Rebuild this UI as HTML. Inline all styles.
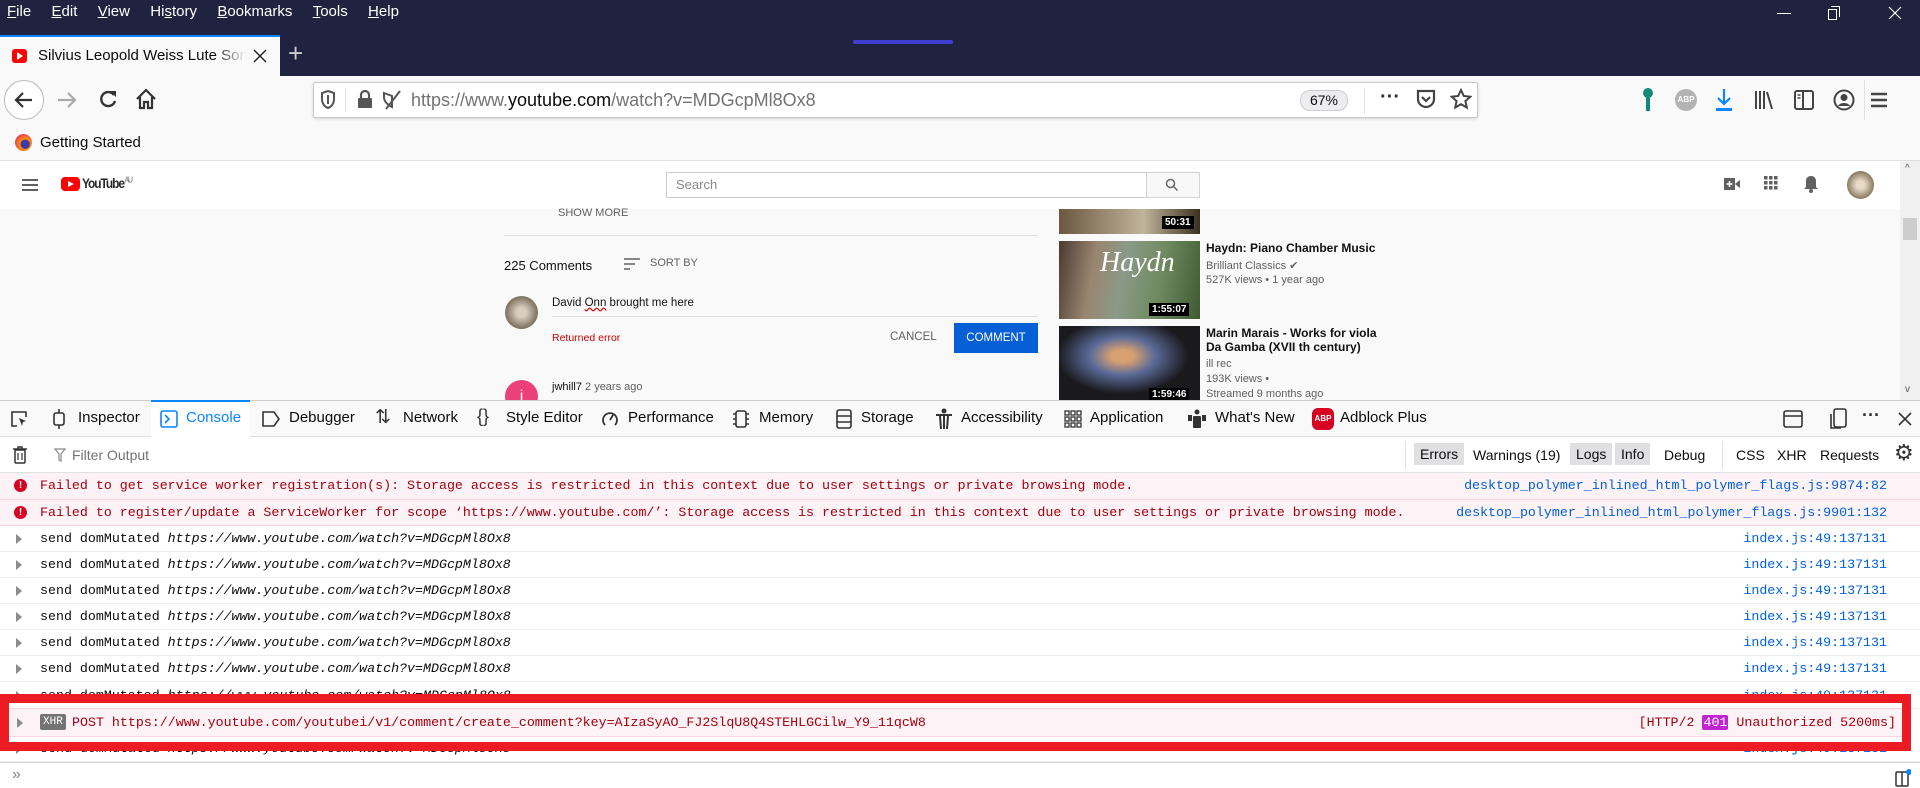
<!DOCTYPE html>
<html><head><meta charset="utf-8"><style>
*{box-sizing:border-box;margin:0;padding:0}
body{width:1920px;height:788px;overflow:hidden;position:relative;background:#fff;font-family:"Liberation Sans",sans-serif;font-size:15px;color:#0c0c0d}
.a{position:absolute;white-space:nowrap}
.mono{font-family:"Liberation Mono",monospace;font-size:13.3px}
.row{position:absolute;left:0;width:1920px;height:26px;border-bottom:1px solid #ededf0}
.row .t{position:absolute;left:40px;top:5px}
.row .s{position:absolute;right:33px;top:5px;color:#0060df}
.tri{position:absolute;left:16px;top:8px;width:0;height:0;border-left:6px solid #8a8a8f;border-top:5px solid transparent;border-bottom:5px solid transparent}
.err{background:#fdf2f5;border-bottom:1px solid #fcd3dc;color:#a4000f}
.ei{position:absolute;left:14px;top:6px;width:13px;height:13px;border-radius:50%;background:#d70022;color:#fff;font:bold 10px "Liberation Sans";text-align:center;line-height:13px}
.dt{position:absolute;top:409px;font-size:15px;color:#0c0c0d}
.fb{position:absolute;top:445px;font-size:14px;color:#0c0c0d;padding:2px 4px}
</style></head><body>
<div class="a" style="left:0;top:0;width:1920px;height:76px;background:#20233f"></div>
<div class="a" style="left:7px;top:3px;color:#fff;font-size:15px;word-spacing:6px"><u>F</u>ile &nbsp;<u>E</u>dit &nbsp;<u>V</u>iew &nbsp;Hi<u>s</u>tory &nbsp;<u>B</u>ookmarks &nbsp;<u>T</u>ools &nbsp;<u>H</u>elp</div>
<div class="a" style="left:853px;top:40px;width:100px;height:4px;border-radius:2px;background:#4040d0"></div>
<div class="a" style="left:1777px;top:13px;width:14px;height:1px;background:#fff"></div>
<div class="a" style="left:1828px;top:9px;width:9px;height:11px;border:1px solid #fff"></div>
<div class="a" style="left:1831px;top:6px;width:9px;height:11px;border-top:1px solid #fff;border-right:1px solid #fff"></div>
<svg class="a" style="left:1888px;top:6px" width="14" height="14" viewBox="0 0 14 14"><path d="M1 1l12 12M13 1L1 13" stroke="#fff" stroke-width="1.2"/></svg>
<div class="a" style="left:0;top:35px;width:280px;height:41px;background:#f9f9fa;border-top:2px solid #0a84ff"></div>
<div class="a" style="left:12px;top:49px;width:15px;height:14px;border-radius:3px;background:#f00"></div>
<div class="a" style="left:17px;top:52px;border-left:6px solid #fff;border-top:4px solid transparent;border-bottom:4px solid transparent"></div>
<div class="a" style="left:38px;top:47px;font-size:15px;width:208px;overflow:hidden;-webkit-mask-image:linear-gradient(90deg,#000 85%,transparent)">Silvius Leopold Weiss Lute Sonata</div>
<svg class="a" style="left:253px;top:49px" width="14" height="14" viewBox="0 0 14 14"><path d="M1 1l12 12M13 1L1 13" stroke="#222" stroke-width="1.4"/></svg>
<div class="a" style="left:288px;top:38px;color:#ccc;font-size:26px">+</div>
<div class="a" style="left:0;top:76px;width:1920px;height:85px;background:#f9f9fa;border-bottom:1px solid #e0e0e2"></div>
<div class="a" style="left:4px;top:80px;width:40px;height:40px;border-radius:50%;border:1px solid #bbb;background:#fff"></div>
<svg class="a" style="left:10px;top:86px" width="28" height="28" viewBox="0 0 28 28"><path d="M22 14H6M13 7l-7 7 7 7" stroke="#333" stroke-width="2.2" fill="none"/></svg>
<svg class="a" style="left:54px;top:87px" width="26" height="26" viewBox="0 0 26 26"><path d="M4 13h17M14 6l7 7-7 7" stroke="#aaa" stroke-width="2.2" fill="none"/></svg>
<svg class="a" style="left:97px;top:88px" width="22" height="22" viewBox="0 0 22 22"><path d="M17 7A7 7 0 1 0 18 13" stroke="#333" stroke-width="2.4" fill="none"/><path d="M13 3h6v6z" fill="#333"/></svg>
<svg class="a" style="left:134px;top:87px" width="24" height="24" viewBox="0 0 24 24"><path d="M3 12L12 3l9 9M6 10v11h4v-6h4v6h4V10" stroke="#333" stroke-width="2.2" fill="none"/></svg>
<div class="a" style="left:313px;top:82px;width:1165px;height:36px;background:#fff;border:1px solid #c8c8c8;border-radius:2px;box-shadow:0 1px 3px rgba(0,0,0,.15)"></div>
<svg class="a" style="left:320px;top:90px" width="16" height="20" viewBox="0 0 16 20"><path d="M8 1l6 2v6c0 5-3 8-6 9-3-1-6-4-6-9V3z" stroke="#555" stroke-width="2" fill="none"/><path d="M8 5v9" stroke="#555" stroke-width="2"/></svg>
<div class="a" style="left:345px;top:88px;width:1px;height:24px;background:#ddd"></div>
<svg class="a" style="left:357px;top:89px" width="16" height="20" viewBox="0 0 16 20"><path d="M4 9V6a4 4 0 0 1 8 0v3" stroke="#555" stroke-width="2.2" fill="none"/><rect x="1" y="9" width="14" height="10" rx="1" fill="#555"/></svg>
<svg class="a" style="left:381px;top:89px" width="22" height="22" viewBox="0 0 22 22"><path d="M3 4l8 3 0 11c-4-2-8-5-8-10z" stroke="#555" stroke-width="2" fill="none"/><path d="M5 20L19 2" stroke="#555" stroke-width="2"/></svg>
<div class="a" style="left:411px;top:90px;font-size:18px;color:#737373">https://www.<span style="color:#0c0c0d">youtube.com</span>/watch?v=MDGcpMl8Ox8</div>
<div class="a" style="left:1300px;top:90px;width:48px;height:21px;border:1px solid #ccc;border-radius:10px;background:#ededf0;font-size:14px;text-align:center;line-height:19px">67%</div>
<div class="a" style="left:1364px;top:88px;width:1px;height:26px;background:#e0e0e0"></div>
<div class="a" style="left:1380px;top:86px;font-size:20px;color:#333;font-weight:bold">···</div>
<svg class="a" style="left:1416px;top:89px" width="20" height="22" viewBox="0 0 20 22"><path d="M2 2h16v8a8 8 0 0 1-16 0z" stroke="#444" stroke-width="2.2" fill="none"/><path d="M6 8l4 4 4-4" stroke="#444" stroke-width="2.2" fill="none"/></svg>
<svg class="a" style="left:1450px;top:88px" width="22" height="22" viewBox="0 0 22 22"><path d="M11 2l2.8 6 6.5.7-4.9 4.4 1.4 6.4L11 16.2 5.2 19.5l1.4-6.4L1.7 8.7 8.2 8z" stroke="#444" stroke-width="2" fill="none"/></svg>
<svg class="a" style="left:1641px;top:87px" width="14" height="26" viewBox="0 0 14 26"><circle cx="7" cy="6" r="5" fill="#14897a"/><rect x="5" y="9" width="4" height="15" fill="#14897a"/></svg>
<div class="a" style="left:1675px;top:89px;width:22px;height:22px;border-radius:50%;background:#b3b3b3;color:#fff;font:bold 8px 'Liberation Sans';text-align:center;line-height:22px">ABP</div>
<svg class="a" style="left:1715px;top:88px" width="18" height="24" viewBox="0 0 18 24"><path d="M9 1v15M3 10l6 6 6-6" stroke="#0a84ff" stroke-width="2.2" fill="none"/><rect x="1" y="20" width="16" height="3" fill="#0a84ff"/></svg>
<svg class="a" style="left:1754px;top:89px" width="20" height="22" viewBox="0 0 20 22"><path d="M2 2v18M6 2v18M10 2v18M13 3l5 17" stroke="#444" stroke-width="2"/></svg>
<svg class="a" style="left:1794px;top:89px" width="20" height="22" viewBox="0 0 20 22"><rect x="1" y="2" width="18" height="18" rx="2" stroke="#444" stroke-width="2" fill="none"/><path d="M9 2v18" stroke="#444" stroke-width="2"/><path d="M3.5 6h3M3.5 9h3" stroke="#444" stroke-width="1.5"/></svg>
<svg class="a" style="left:1833px;top:89px" width="22" height="22" viewBox="0 0 22 22"><circle cx="11" cy="11" r="9.5" stroke="#444" stroke-width="2" fill="none"/><circle cx="11" cy="8.5" r="3.5" fill="#444"/><path d="M5 17c2-4 10-4 12 0" fill="#444"/></svg>
<div class="a" style="left:1864px;top:80px;width:1px;height:40px;background:#e0e0e0"></div>
<svg class="a" style="left:1870px;top:91px" width="18" height="18" viewBox="0 0 18 18"><path d="M1 3h16M1 9h16M1 15h16" stroke="#444" stroke-width="2.4"/></svg>
<div class="a" style="left:15px;top:134px;width:17px;height:17px;border-radius:50%;background:radial-gradient(circle at 60% 60%,#3e3aa8 30%,#ff9500 35%,#e31587 90%)"></div>
<div class="a" style="left:40px;top:134px;font-size:15px">Getting Started</div>
<div class="a" style="left:0;top:161px;width:1900px;height:240px;background:#f9f9f9"></div>
<div class="a" style="left:0;top:161px;width:1900px;height:48px;background:#fff"></div>
<svg class="a" style="left:21px;top:178px" width="18" height="14" viewBox="0 0 18 14"><path d="M1 2h16M1 7h16M1 12h16" stroke="#606060" stroke-width="2"/></svg>
<div class="a" style="left:61px;top:177px;width:19px;height:14px;border-radius:4px;background:#f00"></div>
<div class="a" style="left:68px;top:181px;border-left:6px solid #fff;border-top:3.5px solid transparent;border-bottom:3.5px solid transparent"></div>
<div class="a" style="left:82px;top:175px;font-size:14px;font-weight:bold;letter-spacing:-1.2px;color:#282828;transform:scaleX(.85);transform-origin:left">YouTube<sup style="font-size:8px;font-weight:normal;color:#606060"> AU</sup></div>
<div class="a" style="left:666px;top:172px;width:481px;height:26px;border:1px solid #ccc;background:#fff"></div>
<div class="a" style="left:676px;top:177px;font-size:13px;color:#888">Search</div>
<div class="a" style="left:1146px;top:172px;width:54px;height:26px;border:1px solid #d3d3d3;background:#f8f8f8"></div>
<svg class="a" style="left:1165px;top:178px" width="14" height="14" viewBox="0 0 14 14"><circle cx="5.5" cy="5.5" r="4" stroke="#666" stroke-width="1.5" fill="none"/><path d="M8.5 8.5l4 4" stroke="#666" stroke-width="1.5"/></svg>
<svg class="a" style="left:1724px;top:177px" width="16" height="14" viewBox="0 0 16 14"><rect x="0" y="1" width="11" height="12" fill="#606060"/><path d="M11 7l5-4v8z" fill="#606060"/><path d="M5.5 4v6M2.5 7h6" stroke="#fff" stroke-width="1.6"/></svg>
<svg class="a" style="left:1764px;top:176px" width="14" height="14" viewBox="0 0 14 14" fill="#606060"><rect x="0" y="0" width="3.5" height="3.5"/><rect x="5" y="0" width="3.5" height="3.5"/><rect x="10" y="0" width="3.5" height="3.5"/><rect x="0" y="5" width="3.5" height="3.5"/><rect x="5" y="5" width="3.5" height="3.5"/><rect x="10" y="5" width="3.5" height="3.5"/><rect x="0" y="10" width="3.5" height="3.5"/><rect x="5" y="10" width="3.5" height="3.5"/><rect x="10" y="10" width="3.5" height="3.5"/></svg>
<svg class="a" style="left:1804px;top:175px" width="14" height="18" viewBox="0 0 14 18"><path d="M7 1c3 0 5 2 5 5v6l2 2H0l2-2V6c0-3 2-5 5-5z" fill="#606060"/><circle cx="7" cy="16" r="2" fill="#606060"/></svg>
<div class="a" style="left:1847px;top:171px;width:27px;height:28px;border-radius:50%;background:radial-gradient(circle,#e8dcc8 20%,#8a7a60 70%,#6d6a5a)"></div>
<div class="a" style="left:1900px;top:161px;width:20px;height:240px;background:#f0f0f0"></div>
<div class="a" style="left:1903px;top:218px;width:14px;height:22px;background:#cdcdcd"></div>
<div class="a" style="left:1905px;top:163px;font-size:10px;color:#555">^</div>
<div class="a" style="left:1905px;top:384px;font-size:10px;color:#555">v</div>
<div class="a" style="left:558px;top:207px;font-size:11px;color:#606060">SHOW MORE</div>
<div class="a" style="left:504px;top:235px;width:534px;height:1px;background:#e0e0e0"></div>
<div class="a" style="left:504px;top:258px;font-size:13px;color:#111">225 Comments</div>
<svg class="a" style="left:624px;top:258px" width="16" height="13" viewBox="0 0 16 13"><path d="M0 1h16M0 6h11M0 11h6" stroke="#606060" stroke-width="1.6"/></svg>
<div class="a" style="left:650px;top:257px;font-size:11px;color:#606060">SORT BY</div>
<div class="a" style="left:505px;top:296px;width:33px;height:33px;border-radius:50%;background:radial-gradient(circle,#d8cfc0 20%,#847866 65%,#5b5448)"></div>
<div class="a" style="left:552px;top:297px;font-size:11.5px;color:#111">David <span style="text-decoration:underline wavy #d00">Onn</span> brought me here</div>
<div class="a" style="left:552px;top:316px;width:486px;height:1px;background:#ddd"></div>
<div class="a" style="left:552px;top:332px;font-size:10.5px;color:#c00">Returned error</div>
<div class="a" style="left:890px;top:331px;font-size:11.5px;color:#606060">CANCEL</div>
<div class="a" style="left:954px;top:323px;width:84px;height:30px;background:#065fd4;color:#fff;font-size:11.5px;text-align:center;line-height:30px">COMMENT</div>
<div class="a" style="left:505px;top:380px;width:33px;height:33px;border-radius:50%;background:#ec407a;color:#fff;text-align:center;font-size:16px;line-height:33px">j</div>
<div class="a" style="left:552px;top:381px;font-size:11px;color:#111">jwhill7 <span style="color:#606060">2 years ago</span></div>
<div class="a" style="left:1059px;top:209px;width:141px;height:25px;background:linear-gradient(90deg,#6a5840,#c0b49a 60%,#3a3020)"></div>
<div class="a" style="left:1162px;top:216px;background:#000;color:#fff;font:bold 10px 'Liberation Sans';padding:1px 3px">50:31</div>
<div class="a" style="left:1059px;top:241px;width:141px;height:78px;background:linear-gradient(100deg,#4a3a30 0%,#9a8570 25%,#8a9a88 45%,#6f8a60 70%,#3f5a30)"></div>
<div class="a" style="left:1100px;top:247px;font:italic 28px 'Liberation Serif';color:#fff">Haydn</div>
<div class="a" style="left:1149px;top:303px;background:#000;color:#fff;font:bold 10px 'Liberation Sans';padding:1px 3px">1:55:07</div>
<div class="a" style="left:1059px;top:326px;width:141px;height:75px;background:radial-gradient(ellipse at 45% 40%,#d6a070 10%,#5a6a98 30%,#1a1a1c 60%)"></div>
<div class="a" style="left:1149px;top:388px;background:#000;color:#fff;font:bold 10px 'Liberation Sans';padding:1px 3px">1:59:46</div>
<div class="a" style="left:1206px;top:241px;font-size:12px;font-weight:bold;color:#111">Haydn: Piano Chamber Music</div>
<div class="a" style="left:1206px;top:259px;font-size:11px;color:#606060">Brilliant Classics ✔</div>
<div class="a" style="left:1206px;top:274px;font-size:11px;color:#606060">527K views • 1 year ago</div>
<div class="a" style="left:1206px;top:326px;font-size:12px;font-weight:bold;color:#111;line-height:14px">Marin Marais - Works for viola<br>Da Gamba (XVII th century)</div>
<div class="a" style="left:1206px;top:357px;font-size:11px;color:#606060;line-height:15px">ill rec<br>193K views •<br>Streamed 9 months ago</div>
<div class="a" style="left:0;top:400px;width:1920px;height:37px;background:#f9f9fa;border-top:1px solid #ccc;border-bottom:1px solid #e0e0e2"></div>
<div class="a" style="left:151px;top:400px;width:99px;height:37px;background:#fff;border-top:2px solid #0a84ff"></div>
<svg class="a" style="left:10px;top:410px" width="18" height="18" viewBox="0 0 18 18"><path d="M7 16H2V2h14v5" stroke="#333" stroke-width="1.6" fill="none"/><path d="M9 8l7 3-3 1-1 4z" fill="#333"/></svg>
<svg class="a" style="left:52px;top:409px" width="14" height="20" viewBox="0 0 14 20"><rect x="2" y="4" width="10" height="12" rx="2" stroke="#333" stroke-width="1.6" fill="none"/><path d="M7 0v4M7 16v4" stroke="#333" stroke-width="1.6"/></svg>
<div class="dt" style="left:78px">Inspector</div>
<svg class="a" style="left:160px;top:410px" width="18" height="18" viewBox="0 0 18 18"><rect x="1" y="1" width="16" height="16" rx="2" stroke="#0a84ff" stroke-width="1.6" fill="none"/><path d="M5 5l4 4-4 4" stroke="#0a84ff" stroke-width="1.6" fill="none"/></svg>
<div class="dt" style="left:186px;color:#0a84ff">Console</div>
<svg class="a" style="left:262px;top:411px" width="18" height="16" viewBox="0 0 18 16"><path d="M1 1h11l5 7-5 7H1z" stroke="#333" stroke-width="1.6" fill="none"/></svg>
<div class="dt" style="left:289px">Debugger</div>
<div class="a" style="left:375px;top:406px;font-size:19px;color:#333">⇅</div>
<div class="dt" style="left:403px">Network</div>
<div class="a" style="left:477px;top:406px;font-size:18px;color:#333">{}</div>
<div class="dt" style="left:506px">Style Editor</div>
<svg class="a" style="left:601px;top:410px" width="18" height="18" viewBox="0 0 18 18"><path d="M4 15A7 7 0 1 1 14 15" stroke="#333" stroke-width="1.8" fill="none"/><path d="M9 10l3-5" stroke="#333" stroke-width="1.8"/></svg>
<div class="dt" style="left:628px">Performance</div>
<svg class="a" style="left:732px;top:409px" width="18" height="20" viewBox="0 0 18 20"><rect x="4" y="2" width="10" height="16" rx="2" stroke="#333" stroke-width="1.6" fill="none"/><path d="M1 5h3M1 10h3M1 15h3M14 5h3M14 10h3M14 15h3" stroke="#333" stroke-width="1.4"/></svg>
<div class="dt" style="left:759px">Memory</div>
<svg class="a" style="left:836px;top:409px" width="16" height="20" viewBox="0 0 16 20"><rect x="1" y="1" width="14" height="18" rx="2" stroke="#333" stroke-width="1.6" fill="none"/><path d="M1 7h14M1 13h14" stroke="#333" stroke-width="1.4"/></svg>
<div class="dt" style="left:861px">Storage</div>
<svg class="a" style="left:935px;top:408px" width="18" height="22" viewBox="0 0 18 22"><circle cx="9" cy="3" r="2.5" fill="#333"/><path d="M1 7h16M9 7v14M5 8l1 13M13 8l-1 13" stroke="#333" stroke-width="2"/></svg>
<div class="dt" style="left:961px">Accessibility</div>
<svg class="a" style="left:1064px;top:410px" width="18" height="18" viewBox="0 0 18 18" fill="none" stroke="#333" stroke-width="1.3"><rect x="1" y="1" width="4" height="4"/><rect x="7" y="1" width="4" height="4"/><rect x="13" y="1" width="4" height="4"/><rect x="1" y="7" width="4" height="4"/><rect x="7" y="7" width="4" height="4"/><rect x="13" y="7" width="4" height="4"/><rect x="1" y="13" width="4" height="4"/><rect x="7" y="13" width="4" height="4"/><rect x="13" y="13" width="4" height="4"/></svg>
<div class="dt" style="left:1090px">Application</div>
<svg class="a" style="left:1188px;top:409px" width="18" height="20" viewBox="0 0 18 20" fill="#333"><circle cx="9" cy="3" r="2.5"/><rect x="5" y="7" width="8" height="12" rx="1"/><rect x="0" y="6" width="4" height="6"/><rect x="14" y="6" width="4" height="6"/></svg>
<div class="dt" style="left:1215px">What's New</div>
<div class="a" style="left:1312px;top:408px;width:22px;height:22px;background:#d70022;border-radius:6px;color:#fff;font:bold 8px 'Liberation Sans';text-align:center;line-height:22px">ABP</div>
<div class="dt" style="left:1340px">Adblock Plus</div>
<svg class="a" style="left:1783px;top:410px" width="20" height="18" viewBox="0 0 20 18"><rect x="1" y="1" width="18" height="16" rx="2" stroke="#333" stroke-width="1.6" fill="none"/><path d="M1 6h18" stroke="#333" stroke-width="1.6"/></svg>
<svg class="a" style="left:1830px;top:408px" width="18" height="22" viewBox="0 0 18 22"><rect x="4" y="1" width="12" height="18" rx="2" stroke="#333" stroke-width="1.6" fill="none"/><path d="M1 6v14h10" stroke="#333" stroke-width="1.6" fill="none"/></svg>
<div class="a" style="left:1862px;top:405px;font-size:18px;font-weight:bold;color:#333">···</div>
<svg class="a" style="left:1898px;top:412px" width="14" height="14" viewBox="0 0 14 14"><path d="M1 1l12 12M13 1L1 13" stroke="#333" stroke-width="1.6"/></svg>
<div class="a" style="left:0;top:437px;width:1920px;height:36px;background:#fff;border-bottom:1px solid #e0e0e2"></div>
<svg class="a" style="left:13px;top:446px" width="14" height="18" viewBox="0 0 14 18"><path d="M0 3h14M5 3V1h4v2" stroke="#333" stroke-width="1.5" fill="none"/><rect x="2" y="4" width="10" height="13" rx="1" stroke="#333" stroke-width="1.5" fill="none"/><path d="M5 7v7M9 7v7" stroke="#333" stroke-width="1.2"/></svg>
<svg class="a" style="left:54px;top:448px" width="12" height="14" viewBox="0 0 12 14"><path d="M1 1h10L7 6v7L5 12V6z" stroke="#888" stroke-width="1.2" fill="none"/></svg>
<div class="fb" style="left:68px;color:#737373">Filter Output</div>
<div class="a" style="left:1405px;top:441px;width:1px;height:28px;background:#e0e0e2"></div>
<div class="fb" style="left:1414px;top:443px;background:#e0e0e2;padding:3px 6px">Errors</div>
<div class="fb" style="left:1469px">Warnings (19)</div>
<div class="fb" style="left:1570px;top:443px;background:#e0e0e2;padding:3px 6px">Logs</div>
<div class="fb" style="left:1615px;top:443px;background:#e0e0e2;padding:3px 6px">Info</div>
<div class="fb" style="left:1660px">Debug</div>
<div class="a" style="left:1722px;top:441px;width:1px;height:28px;background:#e0e0e2"></div>
<div class="fb" style="left:1732px">CSS</div>
<div class="fb" style="left:1773px">XHR</div>
<div class="fb" style="left:1816px">Requests</div>
<div class="a" style="left:1894px;top:440px;font-size:22px;color:#333">⚙</div>
<div class="mono">
<div class="row err" style="top:473px;height:27px"><div class="ei">!</div><span class="t">Failed to get service worker registration(s): Storage access is restricted in this context due to user settings or private browsing mode.</span><span class="s">desktop_polymer_inlined_html_polymer_flags.js:9874:82</span></div>
<div class="row err" style="top:500px;height:26px"><div class="ei">!</div><span class="t">Failed to register/update a ServiceWorker for scope ‘https://www.youtube.com/’: Storage access is restricted in this context due to user settings or private browsing mode.</span><span class="s">desktop_polymer_inlined_html_polymer_flags.js:9901:132</span></div>
<div class="row" style="top:526px"><div class="tri"></div><span class="t">send domMutated <i>https://www.youtube.com/watch?v=MDGcpMl8Ox8</i></span><span class="s">index.js:49:137131</span></div>
<div class="row" style="top:552px"><div class="tri"></div><span class="t">send domMutated <i>https://www.youtube.com/watch?v=MDGcpMl8Ox8</i></span><span class="s">index.js:49:137131</span></div>
<div class="row" style="top:578px"><div class="tri"></div><span class="t">send domMutated <i>https://www.youtube.com/watch?v=MDGcpMl8Ox8</i></span><span class="s">index.js:49:137131</span></div>
<div class="row" style="top:604px"><div class="tri"></div><span class="t">send domMutated <i>https://www.youtube.com/watch?v=MDGcpMl8Ox8</i></span><span class="s">index.js:49:137131</span></div>
<div class="row" style="top:630px"><div class="tri"></div><span class="t">send domMutated <i>https://www.youtube.com/watch?v=MDGcpMl8Ox8</i></span><span class="s">index.js:49:137131</span></div>
<div class="row" style="top:656px"><div class="tri"></div><span class="t">send domMutated <i>https://www.youtube.com/watch?v=MDGcpMl8Ox8</i></span><span class="s">index.js:49:137131</span></div>
<div class="row" style="top:683px"><div class="tri"></div><span class="t">send domMutated <i>https://www.youtube.com/watch?v=MDGcpMl8Ox8</i></span><span class="s">index.js:49:137131</span></div>
<div class="row" style="top:736px"><div class="tri"></div><span class="t">send domMutated <i>https://www.youtube.com/watch?v=MDGcpMl8Ox8</i></span><span class="s">index.js:49:137131</span></div>
<div class="a" style="left:0;top:694px;width:1911px;height:57px;border:9px solid #ed1c24;background:#fff"></div>
<div class="row err" style="left:9px;top:708px;width:1893px;height:29px;border-top:1px solid #fcd3dc">
<div class="tri" style="left:8px;top:9px"></div>
<div class="a" style="left:31px;top:5px;background:#737373;color:#fff;font-size:11px;padding:2px 3px;border-radius:2px">XHR</div>
<span class="t" style="left:63px;top:6px">POST https://www.youtube.com/youtubei/v1/comment/create_comment?key=AIzaSyAO_FJ2SlqU8Q4STEHLGCilw_Y9_11qcW8</span>
<span class="s" style="right:6px;top:6px;color:#a4000f">[HTTP/2 <span style="background:#c124d3;color:#fff;border-radius:2px;padding:0 1px">401</span> Unauthorized 5200ms]</span></div>
</div>
<div class="a" style="left:0;top:762px;width:1920px;height:1px;background:#d7d7db"></div>
<div class="a" style="left:12px;top:766px;font-size:16px;color:#888">»</div>
<svg class="a" style="left:1895px;top:769px" width="16" height="18" viewBox="0 0 16 18"><rect x="1" y="3" width="12" height="14" rx="1" stroke="#333" stroke-width="1.5" fill="none"/><path d="M7 3v14" stroke="#333" stroke-width="1.5"/><circle cx="14" cy="3" r="3" fill="#0a84ff"/></svg>
</body></html>
